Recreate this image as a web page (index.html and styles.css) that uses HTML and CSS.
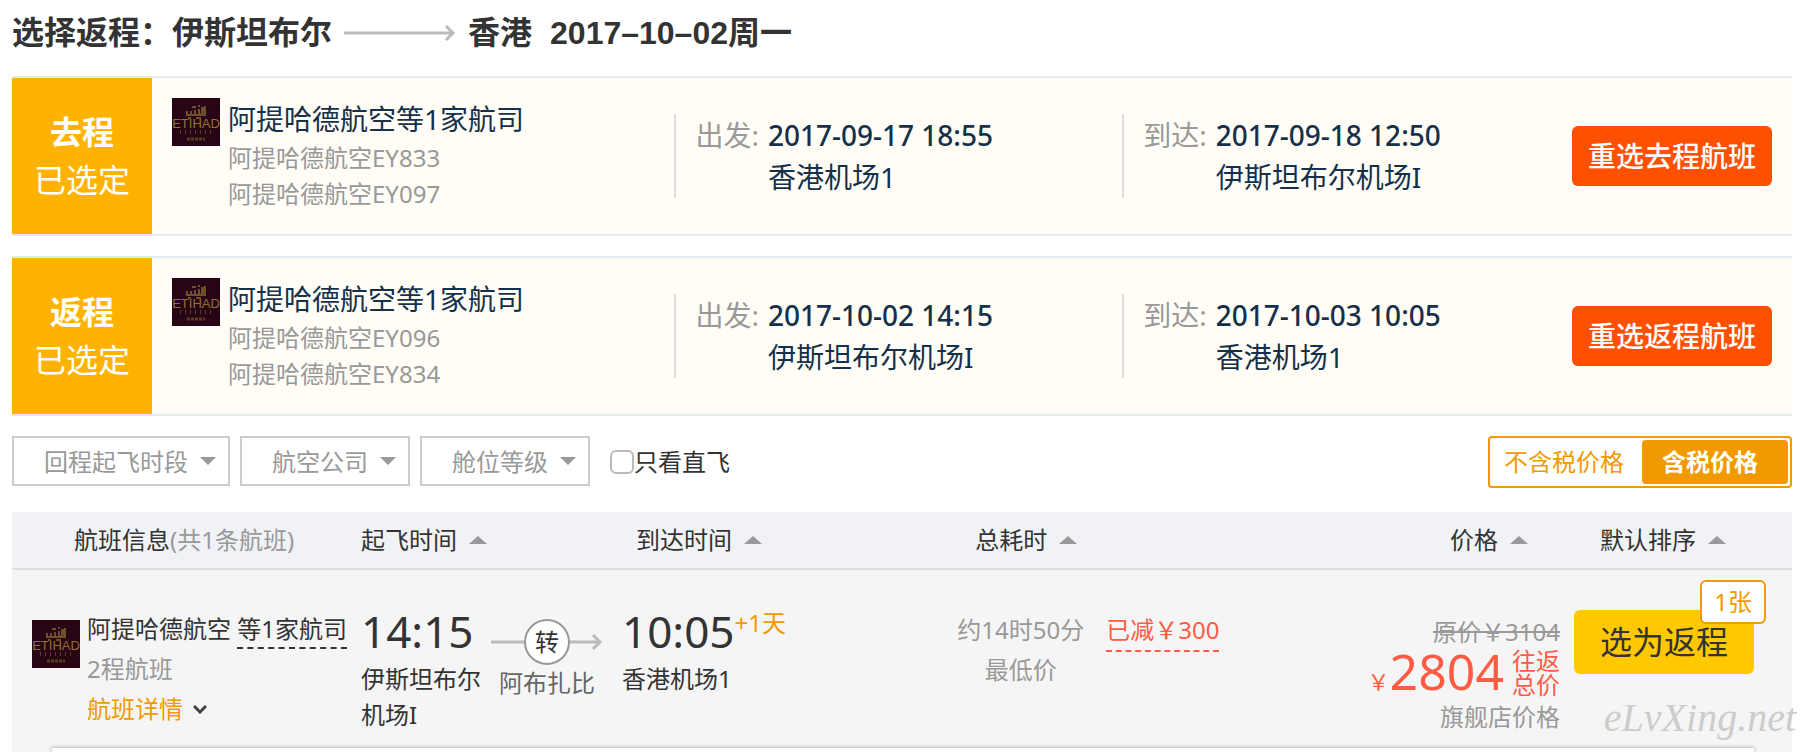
FILE: index.html
```html
<!DOCTYPE html>
<html lang="zh-CN">

<head>
    <meta charset="UTF-8">
    <meta name="viewport" content="width=device-width, initial-scale=1.0">
    <title>选择返程</title>
    <link rel="stylesheet" href="styles.css">
</head>

<body>

    <!-- Shared airline logo -->
    <svg class="sprite" aria-hidden="true">
        <symbol id="etihad" viewBox="0 0 48 48">
            <rect width="48" height="48" fill="#270515" />
            <g fill="none" stroke="#6f4f28" stroke-width="2">
                <path d="M15 13v4h4v-4M19 17h4v-5M23 17h4v-6M27 17c3 0 5-2 5-8M20 9h4M26 8h2M30 9v8h3V8M16 20h3M24 20h5" />
            </g>
            <text x="24" y="30" text-anchor="middle" class="logo-name">ETIHAD</text>
            <path d="M8 34h33" stroke="#5c3d22" stroke-width="4" stroke-dasharray="1 4" />
            <path d="M15 41h18" stroke="#5c3d22" stroke-width="3" stroke-dasharray="3 1" />
        </symbol>
    </svg>

    <h1 class="page-title">
        <span>选择返程：伊斯坦布尔</span>
        <svg class="title-arrow" width="112" height="18" viewBox="0 0 112 18" aria-hidden="true">
            <path d="M0 9h109M102 2l7 7-7 7" fill="none" stroke="#bbb" stroke-width="3" />
        </svg>
        <span>香港</span>
        <span class="title-date">2017–10–02周一</span>
    </h1>

    <!-- Selected flights -->
    <section class="selected">
        <div class="selected-tag"><strong>去程</strong><span>已选定</span></div>
        <div class="selected-airline">
            <svg class="logo"><use href="#etihad" /></svg>
            <div>
                <div class="airline-name">阿提哈德航空等1家航司</div>
                <div class="flight-no">阿提哈德航空EY833</div>
                <div class="flight-no">阿提哈德航空EY097</div>
            </div>
        </div>
        <div class="selected-point">
            <span class="point-label">出发:</span>
            <div><span class="point-time">2017-09-17 18:55</span><br>香港机场1</div>
        </div>
        <div class="selected-point">
            <span class="point-label">到达:</span>
            <div><span class="point-time">2017-09-18 12:50</span><br>伊斯坦布尔机场I</div>
        </div>
        <button class="reselect-btn">重选去程航班</button>
    </section>

    <section class="selected">
        <div class="selected-tag"><strong>返程</strong><span>已选定</span></div>
        <div class="selected-airline">
            <svg class="logo"><use href="#etihad" /></svg>
            <div>
                <div class="airline-name">阿提哈德航空等1家航司</div>
                <div class="flight-no">阿提哈德航空EY096</div>
                <div class="flight-no">阿提哈德航空EY834</div>
            </div>
        </div>
        <div class="selected-point">
            <span class="point-label">出发:</span>
            <div><span class="point-time">2017-10-02 14:15</span><br>伊斯坦布尔机场I</div>
        </div>
        <div class="selected-point">
            <span class="point-label">到达:</span>
            <div><span class="point-time">2017-10-03 10:05</span><br>香港机场1</div>
        </div>
        <button class="reselect-btn">重选返程航班</button>
    </section>

    <!-- Filters -->
    <div class="filters">
        <select class="filter-select" aria-label="回程起飞时段">
            <option>回程起飞时段</option>
        </select>
        <select class="filter-select" aria-label="航空公司">
            <option>航空公司</option>
        </select>
        <select class="filter-select" aria-label="舱位等级">
            <option>舱位等级</option>
        </select>
        <div class="direct">
            <input type="checkbox" id="direct-only"><label for="direct-only">只看直飞</label>
        </div>
        <div class="tax-toggle">
            <button class="tax-btn">不含税价格</button>
            <button class="tax-btn active">含税价格</button>
        </div>
    </div>

    <!-- Flight list -->
    <section class="results">
        <table class="flight-table">
            <thead>
                <tr>
                    <th class="col-info">航班信息<span class="muted">(共1条航班)</span></th>
                    <th class="col-depart"><button class="sort-btn">起飞时间</button></th>
                    <th class="col-arrive"><button class="sort-btn">到达时间</button></th>
                    <th class="col-duration"><button class="sort-btn">总耗时</button></th>
                    <th class="col-price"><button class="sort-btn">价格</button></th>
                    <th class="col-action"><button class="sort-btn">默认排序</button></th>
                </tr>
            </thead>
            <tbody>
                <tr>
                    <td class="col-info">
                        <div class="info">
                            <svg class="logo"><use href="#etihad" /></svg>
                            <div class="info-text">
                                <div>阿提哈德航空 <span class="dashed">等1家航司</span></div>
                                <div class="muted">2程航班</div>
                                <a href="#detail" class="detail-link">航班详情
                                    <svg width="14" height="9" viewBox="0 0 14 9" aria-hidden="true">
                                        <path d="M1 1l6 6 6-6" fill="none" stroke="#444" stroke-width="3" />
                                    </svg>
                                </a>
                            </div>
                        </div>
                    </td>
                    <td class="col-depart">
                        <div class="depart">
                            <div class="place">
                                <div class="time">14:15</div>
                                <div>伊斯坦布尔机场I</div>
                            </div>
                            <div class="transfer">
                                <svg width="112" height="46" viewBox="0 1 112 46" aria-hidden="true">
                                    <path d="M0 24h109M102 17l7 7-7 7" fill="none" stroke="#bbb" stroke-width="3" />
                                    <circle cx="56" cy="24" r="22" fill="#fff" stroke="#999" stroke-width="2" />
                                    <text x="56" y="33" text-anchor="middle" class="transfer-mark">转</text>
                                </svg>
                                <div>阿布扎比</div>
                            </div>
                        </div>
                    </td>
                    <td class="col-arrive">
                        <div class="arrive-time"><span class="time">10:05</span><span class="next-day">+1天</span></div>
                        <div class="arrive-place">香港机场1</div>
                    </td>
                    <td class="col-duration">
                        <div class="duration">
                            <div class="duration-text">约14时50分<br>最低价</div>
                            <span class="discount">已减￥300</span>
                        </div>
                    </td>
                    <td class="col-price">
                        <del class="old-price">原价￥3104</del>
                        <div class="price">
                            <span class="currency">￥</span><strong>2804</strong>
                            <span class="price-note">往返<br>总价</span>
                        </div>
                        <div class="shop">旗舰店价格</div>
                    </td>
                    <td class="col-action">
                        <div class="action">
                            <button class="choose-btn">选为返程</button>
                            <span class="badge">1张</span>
                        </div>
                    </td>
                </tr>
            </tbody>
        </table>
        <div class="detail-panel" id="detail"></div>
        <span class="watermark">eLvXing.net</span>
    </section>

</body>

</html>
```
FILE: styles.css
```css
/* General Styles */
* {
    box-sizing: border-box;
}

body {
    display: flex;
    flex-direction: column;
    min-height: 100vh;
    margin: 0;
    padding: 0 16px 0 12px;
    background: #fff;
    color: #333;
    font-family: "Noto Sans", "Noto Sans CJK SC", sans-serif;
    font-size: 24px;
    line-height: 36px;
}

button,
select,
input {
    margin: 0;
    font-family: inherit;
    font-size: inherit;
    line-height: inherit;
    color: inherit;
}

button {
    padding: 0;
    border: none;
    background: none;
    cursor: pointer;
}

.sprite {
    display: none;
}

.logo {
    flex: none;
    width: 48px;
    height: 48px;
}

.logo-name {
    font-family: "Liberation Sans", sans-serif;
    font-size: 13px;
    fill: #94702f;
}

.muted {
    color: #999;
}

/* Title */
.page-title {
    display: flex;
    align-items: center;
    height: 76px;
    margin: 0;
    padding-bottom: 10px;
    font-family: "Liberation Sans", "Noto Sans CJK SC", sans-serif;
    font-size: 32px;
    line-height: 48px;
}

.title-arrow {
    margin: 0 12px;
}

.title-date {
    margin-left: 18px;
}

/* Selected flights */
.selected {
    display: grid;
    grid-template-columns: 140px 7fr 6fr 6fr 222px;
    align-items: center;
    height: 160px;
    margin-bottom: 20px;
    border-top: 2px solid #e5e9f0;
    border-bottom: 2px solid #e5e9f0;
    background: #fffdf6;
    color: #15304a;
    font-size: 28px;
}

.selected-tag {
    display: flex;
    flex-direction: column;
    align-items: center;
    justify-content: center;
    height: 100%;
    background: #ffb200;
    color: #fff;
    font-size: 32px;
    line-height: 48px;
}

.selected-airline {
    display: flex;
    gap: 8px;
    align-self: start;
    padding: 20px 0 0 20px;
}

.airline-name {
    line-height: 42px;
}

.flight-no {
    color: #999;
    font-size: 24px;
}

.selected-point {
    display: flex;
    gap: 9px;
    padding-left: 19px;
    border-left: 2px solid #ddd;
    line-height: 42px;
}

.point-label {
    color: #999;
}

.point-time {
    font-weight: 500;
}

.reselect-btn {
    justify-self: end;
    width: 200px;
    height: 60px;
    margin-right: 20px;
    border-radius: 6px;
    background: #ff5000;
    color: #fff;
    font-weight: 500;
}

/* Filters */
.filters {
    display: flex;
    align-items: flex-start;
    gap: 10px;
    margin-bottom: 24px;
}

.filter-select {
    height: 50px;
    padding: 2px 40px 0 30px;
    border: 2px solid #ccc;
    border-radius: 0;
    appearance: none;
    background: #fff url("data:image/svg+xml,%3Csvg xmlns='http://www.w3.org/2000/svg' width='16' height='8'%3E%3Cpath d='M0 0h16L8 8z' fill='%23999'/%3E%3C/svg%3E") no-repeat right 12px center;
    color: #999;
}

.direct {
    display: flex;
    align-items: center;
    height: 52px;
    margin-left: 10px;
}

.direct input {
    width: 24px;
    height: 24px;
    border: 2px solid #bbb;
    border-radius: 6px;
    appearance: none;
    background: #fff;
}

.tax-toggle {
    display: flex;
    margin-left: auto;
    padding: 2px;
    border: 2px solid #f09a00;
    border-radius: 4px;
}

.tax-btn {
    height: 44px;
    padding: 0 18px 0 12px;
    border-radius: 4px;
    color: #f09a00;
}

.tax-btn.active {
    padding: 0 30px 0 20px;
    background: #f09a00;
    color: #fff;
    font-weight: bold;
}

/* Flight list */
.results {
    display: flex;
    flex: 1;
    flex-direction: column;
    position: relative;
    background: #f5f5f5;
}

.flight-table {
    width: 100%;
    table-layout: fixed;
    border-spacing: 0;
}

.flight-table th {
    height: 58px;
    padding: 0;
    border-bottom: 2px solid #dcdfe3;
    background: #f0f2f5;
    font-weight: normal;
    text-align: left;
}

.flight-table td {
    height: 178px;
    padding: 0;
    vertical-align: top;
}

.sort-btn {
    display: inline-flex;
    align-items: center;
    gap: 12px;
}

.sort-btn::after {
    content: "";
    border: 9px solid transparent;
    border-top: none;
    border-bottom: 8px solid #999;
}

.flight-table th.col-info {
    width: 349px;
    padding-left: 62px;
}

.flight-table th.col-depart {
    width: 261px;
}

.flight-table th.col-arrive {
    padding-left: 14px;
}

.flight-table th.col-duration {
    padding-left: 36px;
}

.flight-table th.col-price {
    padding-right: 46px;
    text-align: right;
}

.flight-table th.col-action {
    width: 218px;
    padding-left: 26px;
}

.info {
    display: flex;
    align-items: flex-start;
    gap: 7px;
    padding: 39px 0 0 20px;
}

.info .logo {
    margin-top: 11px;
}

.info-text {
    line-height: 40px;
    white-space: nowrap;
}

.dashed {
    padding-bottom: 2px;
    border-bottom: 2px dashed #333;
}

.detail-link {
    display: flex;
    align-items: center;
    gap: 10px;
    color: #f09a00;
    text-decoration: none;
}

.time {
    margin-bottom: 6px;
    font-size: 44px;
    line-height: 48px;
}

.depart {
    display: flex;
    gap: 10px;
    padding-top: 37px;
}

.place {
    width: 120px;
}

.transfer {
    padding-top: 12px;
    color: #666;
    text-align: center;
}

.transfer svg {
    display: block;
}

.transfer-mark {
    fill: #333;
}

.arrive-time {
    display: flex;
    align-items: flex-start;
    padding-top: 37px;
}

.next-day {
    color: #f09a00;
    line-height: 32px;
}

.duration {
    display: flex;
    align-items: flex-start;
    gap: 22px;
    padding: 40px 0 0 18px;
}

.duration-text {
    color: #999;
    line-height: 40px;
    text-align: center;
}

.discount {
    border-bottom: 2px dashed #ff5b45;
    color: #ff5b45;
    line-height: 40px;
}

.flight-table td.col-price {
    padding: 45px 14px 0 0;
    color: #999;
    text-align: right;
}

.old-price {
    display: block;
    line-height: 34px;
}

.price {
    display: flex;
    justify-content: flex-end;
    margin-bottom: 2px;
    color: #ff5b45;
}

.price strong {
    font-size: 50px;
    font-weight: normal;
    line-height: 44px;
}

.currency {
    align-self: flex-end;
    font-size: 22px;
    line-height: 32px;
}

.price-note {
    margin-left: 8px;
    line-height: 24px;
}

.action {
    position: relative;
    width: 180px;
    margin-top: 40px;
}

.choose-btn {
    width: 100%;
    height: 64px;
    border-radius: 6px;
    background: #ffc800;
    font-size: 32px;
}

.badge {
    position: absolute;
    top: -30px;
    right: -12px;
    padding: 2px 12px;
    border: 2px solid #f09a00;
    border-radius: 6px;
    background: #fff;
    color: #f09a00;
}

.detail-panel {
    flex: 1;
    margin: 0 38px 0 40px;
    background: #fff;
    box-shadow: 0 0 4px rgba(0, 0, 0, 0.4);
}

.watermark {
    position: absolute;
    right: -4px;
    bottom: 10px;
    color: #ccc;
    font-family: "Liberation Serif", serif;
    font-size: 40px;
    font-style: italic;
    line-height: 48px;
}
```
